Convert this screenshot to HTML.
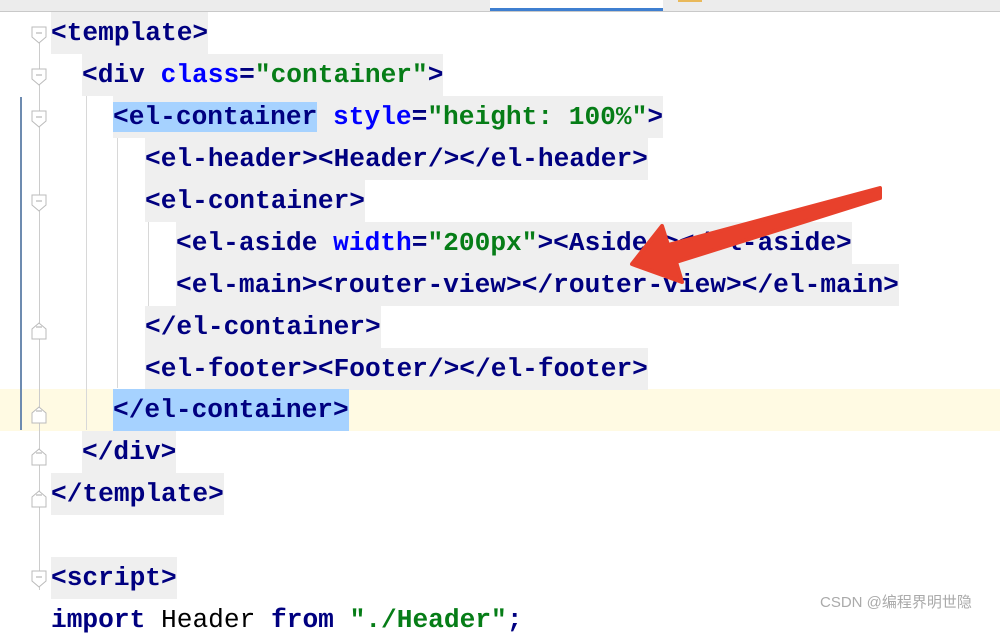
<!DOCTYPE html>
<html><head><meta charset="utf-8"><style>
*{margin:0;padding:0}
body{width:1000px;height:617px;overflow:hidden;background:#fff;position:relative;font-family:"Liberation Mono",monospace;}
.top{position:absolute;left:0;top:0;width:1000px;height:11px;background:#ececec;border-bottom:1px solid #c9c9c9}
.tab{position:absolute;left:490px;top:0;width:173px;height:8px;background:#fff;border-bottom:3px solid #3f7fd0}
.ln{position:absolute;height:42px;line-height:43px;font-size:26.2px;font-weight:bold;white-space:pre;color:#000080;background:#efefef}
.a{color:#0000ff}.s{color:#067d17}.t{color:#000080}
.sel{background:#a6d2ff}
.cur{position:absolute;left:0;top:389px;width:1000px;height:42px;background:#fffae3}
.vl{position:absolute;width:1px;background:#d8d8d8}
</style></head><body>
<div class="top"></div><div class="tab"></div>
<div style="position:absolute;left:678px;top:0;width:24px;height:2px;background:#e9b95b"></div>
<div class="cur"></div>
<div style="position:absolute;left:20px;top:97px;width:2px;height:333px;background:#6d8bb0"></div>
<div class="vl" style="left:86px;top:96px;height:334px"></div>
<div class="vl" style="left:117px;top:138px;height:250px"></div>
<div class="vl" style="left:148px;top:222px;height:84px"></div>
<div class="vl" style="left:39px;top:30px;height:560px;background:#ccc"></div>
<svg style="position:absolute;left:0;top:0" width="60" height="617">
<g fill="#fff" stroke="#bbb" stroke-width="1">
<path d="M32 27h14v10l-7 6-7-6z"/><path d="M32 69h14v10l-7 6-7-6z"/><path d="M32 111h14v10l-7 6-7-6z"/><path d="M32 195h14v10l-7 6-7-6z"/><path d="M32 571h14v10l-7 6-7-6z"/>
<path d="M32 339h14v-10l-7-6-7 6z"/><path d="M32 423h14v-10l-7-6-7 6z"/><path d="M32 465h14v-10l-7-6-7 6z"/><path d="M32 507h14v-10l-7-6-7 6z"/>
</g>
<g stroke="#aaa"><path d="M36 33h6M36 75h6M36 117h6M36 201h6M36 577h6M36 327h6M36 411h6M36 453h6M36 495h6"/></g>
</svg>
<div class="ln" style="left:51px;top:12px">&lt;template&gt;</div>
<div class="ln" style="left:82px;top:54px">&lt;div <span class="a">class</span>=<span class="s">"container"</span>&gt;</div>
<div class="ln" style="left:113px;top:96px"><span class="sel">&lt;el-container</span> <span class="a">style</span>=<span class="s">"height: 100%"</span>&gt;</div>
<div class="ln" style="left:145px;top:138px">&lt;el-header&gt;&lt;Header/&gt;&lt;/el-header&gt;</div>
<div class="ln" style="left:145px;top:180px">&lt;el-container&gt;</div>
<div class="ln" style="left:176px;top:222px">&lt;el-aside <span class="a">width</span>=<span class="s">"200px"</span>&gt;&lt;Aside/&gt;&lt;/el-aside&gt;</div>
<div class="ln" style="left:176px;top:264px">&lt;el-main&gt;&lt;router-view&gt;&lt;/router-view&gt;&lt;/el-main&gt;</div>
<div class="ln" style="left:145px;top:306px">&lt;/el-container&gt;</div>
<div class="ln" style="left:145px;top:348px">&lt;el-footer&gt;&lt;Footer/&gt;&lt;/el-footer&gt;</div>
<div class="ln sel" style="left:113px;top:389px">&lt;/el-container&gt;</div>
<div class="ln" style="left:82px;top:431px">&lt;/div&gt;</div>
<div class="ln" style="left:51px;top:473px">&lt;/template&gt;</div>
<div class="ln" style="left:51px;top:557px">&lt;script&gt;</div>
<div class="ln" style="left:51px;top:599px;background:none"><span>import</span> <span style="color:#000;font-weight:normal">Header</span> from <span class="s">"./Header"</span>;</div>
<svg style="position:absolute;left:0;top:0" width="1000" height="617">
<path d="M880 188 L880 198 L676 262 L682 282 L632 264 L662 226 L668 245 Z" fill="#e8412c" stroke="#e8412c" stroke-width="4" stroke-linejoin="round"/>
</svg>
<div style="position:absolute;left:820px;top:591px;font-family:'Liberation Sans','Noto Sans CJK SC',sans-serif;font-size:15px;color:#aaa">CSDN @编程界明世隐</div>
</body></html>
